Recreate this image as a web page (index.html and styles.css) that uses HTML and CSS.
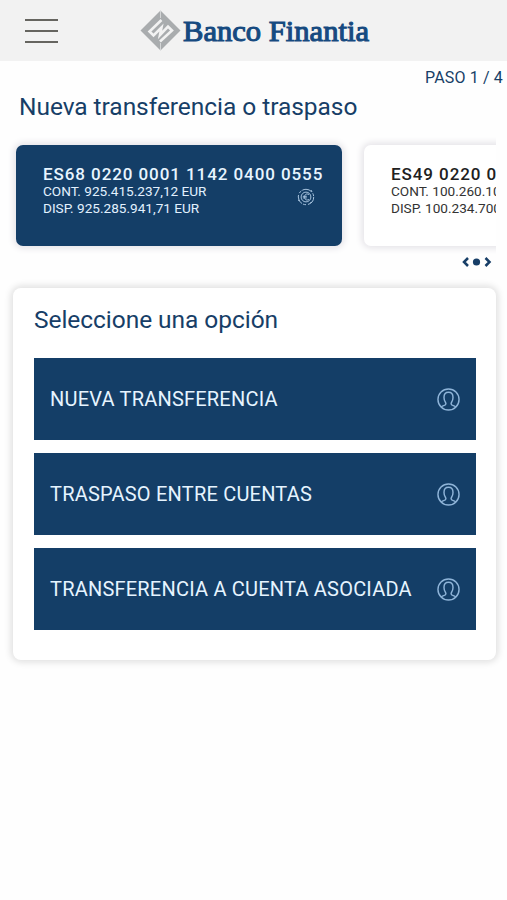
FILE: index.html
```
<!DOCTYPE html>
<html lang="es">
<head>
<meta charset="utf-8">
<title>Banco Finantia</title>
<link rel="stylesheet" href="styles.css">
</head>
<body>
<svg class="defs" width="0" height="0" aria-hidden="true">
  <symbol id="person" viewBox="0 0 24 24">
    <circle cx="12" cy="12" r="11"/>
    <path d="M4.500 20c1-2 4.800-1.300 4.800-3.600 0-1.700-2-2.700-2-6.600 0-3.400 1.900-5.300 4.700-5.300s4.700 1.900 4.700 5.300c0 3.900-2 4.900-2 6.600 0 2.300 3.800 1.600 4.800 3.600"/>
  </symbol>
</svg>
<header class="topbar">
  <button class="menu" aria-label="Menú"><span></span><span></span><span></span></button>
  <svg class="brand" width="240" height="42" viewBox="0 0 240 42">
    <path class="mark" d="M20.500 .5 40.500 20.500 20.500 40.500 .5 20.500z"/>
    <path class="cut" d="M21.500 10 9.500 21.500 13.500 25.500 21.500 17.500 20 25 28 16.500 32 20.500 20 31.500"/>
    <path class="seam" d="M20.500 1v7M20.500 33v7"/>
    <text class="name" x="43" y="31" textLength="186" lengthAdjust="spacingAndGlyphs">Banco Finantia</text>
  </svg>
</header>
<main>
  <p class="step">PASO 1 / 4</p>
  <h1>Nueva transferencia o traspaso</h1>
  <section class="accounts">
    <article class="account selected">
      <div class="iban">ES68 0220 0001 1142 0400 0555</div>
      <div class="balances">
        <div>CONT. 925.415.237,12 EUR<br>DISP. 925.285.941,71 EUR</div>
        <svg class="currency" width="18" height="18" viewBox="0 0 18 18">
          <circle cx="9" cy="9" r="7.700" stroke-dasharray="10 2 3 1.100"/>
          <circle cx="9" cy="9" r="4.900"/>
          <path d="M12 6.500C9 5 7.500 7 7.500 9s1.500 4 4.500 2.500M5.800 8.300h4M5.800 9.900h4M1 12l2 1M14 2l1 2M15 14l-2 1"/>
        </svg>
      </div>
    </article>
    <article class="account">
      <div class="iban">ES49 0220 0</div>
      <div class="balances"><div>CONT. 100.260.10<br>DISP. 100.234.700</div></div>
    </article>
  </section>
  <nav class="pager">
    <svg width="30" height="12" viewBox="0 0 30 12">
      <path d="M6 2 2 6l4 4M23.500 2l4 4-4 4"/>
      <circle cx="14.500" cy="6" r="3.600"/>
    </svg>
  </nav>
  <section class="options">
    <h2>Seleccione una opción</h2>
    <button class="option"><span>NUEVA TRANSFERENCIA</span><svg><use href="#person"/></svg></button>
    <button class="option"><span>TRASPASO ENTRE CUENTAS</span><svg><use href="#person"/></svg></button>
    <button class="option"><span>TRANSFERENCIA A CUENTA ASOCIADA</span><svg><use href="#person"/></svg></button>
  </section>
</main>
</body>
</html>
```
FILE: styles.css
```
* { box-sizing: border-box; }
body { margin: 0; min-height: 900px; background: #fefefe; color: #173e67; font-family: Roboto, sans-serif; }
button { border: 0; font: inherit; text-align: left; }
.defs { display: block; }
.topbar { height: 61px; background: #f2f2f2; display: flex; align-items: flex-start; padding: 10px 0 0 25px; }
.menu { width: 34px; height: 24px; margin-top: 9px; padding: 0; background: none; display: flex; flex-direction: column; justify-content: space-between; }
.menu span { display: block; width: 33px; height: 2px; background: #666560; }
.brand { margin-left: 81px; }
.mark { fill: #a9acae; }
.cut { fill: none; stroke: #f2f2f2; stroke-width: 2.600; }
.seam { stroke: #d5d7d8; stroke-width: 1; }
.name { font: 400 30px "Liberation Serif", serif; fill: #164a80; stroke: #164a80; stroke-width: 1.100; }
.step { margin: 0; padding: 7px 4px 0 0; text-align: right; font-size: 16px; line-height: 20px; letter-spacing: .15px; }
h1 { margin: 5px 0 0 19px; font-size: 24.500px; line-height: 28px; font-weight: 400; letter-spacing: -.05px; }
.accounts { display: flex; gap: 22px; margin-right: 11px; padding: 24px 0 8px 16px; overflow: hidden; }
.account { flex: 0 0 326px; min-width: 0; height: 101px; padding: 19px 18px 0 27px; border-radius: 7px; background: #fff; color: #333; box-shadow: 0 0 7px 2px #e3e1e6; }
.selected { background: #143e67; color: #e2f1ff; }
.iban { font-size: 17px; line-height: 20px; font-weight: 500; letter-spacing: .920px; white-space: nowrap; color: #202020; }
.selected .iban { color: #e8f5ff; }
.balances { display: flex; justify-content: space-between; margin-top: -1px; font-size: 13.600px; line-height: 16.500px; white-space: nowrap; }
.currency { margin: 5px 9px 0 0; fill: none; stroke: #a8c4df; stroke-width: 1; }
.pager { height: 16px; padding-right: 15px; display: flex; justify-content: flex-end; }
.pager svg { margin-top: 2px; fill: #173e67; }
.pager path { fill: none; stroke: #173e67; stroke-width: 2.500; }
.options { margin: 18px 11px 0 13px; height: 372px; padding: 17px 20px 0 21px; background: #fff; border-radius: 8px; box-shadow: 0 0 7px 2px #dedede; }
h2 { margin: 0 0 23px; font-size: 24.500px; line-height: 30px; font-weight: 400; letter-spacing: -.05px; }
.option { width: 100%; height: 82px; margin-bottom: 13px; padding: 0 16px; display: flex; align-items: center; justify-content: space-between; background: #143e67; color: #e6f4ff; font-size: 20px; letter-spacing: .21px; white-space: nowrap; }
.option svg { width: 23px; height: 23px; fill: none; stroke: #8fb4d8; stroke-width: 1.500; }
```
